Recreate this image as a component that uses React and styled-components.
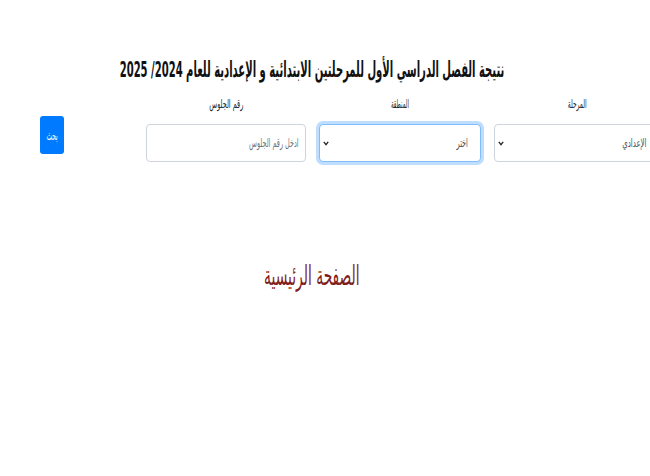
import styled, { createGlobalStyle } from "styled-components";

const GlobalStyle = createGlobalStyle`
  html, body {
    margin: 0;
    padding: 0;
    background: #fff;
    overflow: hidden;
  }
  body {
    font-family: "DejaVu Sans Condensed", "DejaVu Sans", sans-serif;
    color: #212529;
  }
`;

// the screenshot's text is very narrow, so glyphs are squeezed sideways
const Narrow = styled.span`
  display: inline-block;
  white-space: nowrap;
  transform: scaleX(${(p) => p.$s || 0.58});
  transform-origin: ${(p) => p.$o || "center"} center;
`;

const Page = styled.div`
  width: 650px;
  padding-top: 55px;
`;

const Title = styled.h1`
  width: 624px;
  margin: 0;
  display: flex;
  justify-content: center;
  direction: rtl;
  font-size: 22px;
  font-weight: bold;
  line-height: 29px;
  color: #111;
`;

const Form = styled.form`
  display: flex;
  direction: rtl;
  align-items: flex-start;
  gap: 13px;
  width: 620px;
  margin: 13px 0 0 40px;
`;

const Field = styled.div`
  flex: 0 0 ${(p) => p.$w}px;
  display: flex;
  flex-direction: column;
  align-items: stretch;
`;

const Label = styled.label`
  display: flex;
  justify-content: center;
  font-size: 12px;
  line-height: 14px;
  margin-bottom: 13px;
  color: #212529;
`;

const Control = styled.div`
  box-sizing: border-box;
  height: 38px;
  display: flex;
  align-items: center;
  justify-content: space-between;
  padding: 0 ${(p) => (p.$placeholder ? 6 : 12)}px 0 3px;
  border: 1px solid ${(p) => (p.$focus ? "#80bdff" : "#ced4da")};
  border-radius: 4px;
  box-shadow: ${(p) => (p.$focus ? "0 0 0 3px rgba(0, 123, 255, 0.25)" : "none")};
  background: #fff;
  font-size: 12px;
  color: ${(p) => (p.$placeholder ? "#6c757d" : "#495057")};
`;

const Chevron = () => (
  <svg width="6" height="6" viewBox="0 0 6 6">
    <polyline points="0.8,1.8 3,4.6 5.2,1.8" fill="none" stroke="#222" strokeWidth="1.3" />
  </svg>
);

const Button = styled.button`
  margin: 19px 0 0 0;
  margin-right: auto;
  width: 24px;
  height: 38px;
  padding: 0;
  border: none;
  border-radius: 3px;
  background: #007bff;
  color: #fff;
  font-family: inherit;
  font-size: 13px;
`;

const Home = styled.h2`
  width: 624px;
  margin: 97px 0 0 0;
  display: flex;
  justify-content: center;
  direction: rtl;
  font-size: 28px;
  line-height: 34px;
  font-weight: normal;
  color: #7f1d1d;
`;

export default function App() {
  return (
    <Page>
      <GlobalStyle />
      <Title>
        <Narrow $s={0.506}>نتيجة الفصل الدراسي الأول للمرحلتين الابتدائية و الإعدادية للعام 2024/ 2025</Narrow>
      </Title>
      <Form>
        <Field $w={166}>
          <Label><Narrow $s={0.55}>المرحلة</Narrow></Label>
          <Control>
            <Narrow $s={0.65} $o="right">الإعدادي</Narrow>
            <Chevron />
          </Control>
        </Field>
        <Field $w={162}>
          <Label><Narrow $s={0.5}>المنطقة</Narrow></Label>
          <Control $focus>
            <Narrow $s={0.6} $o="right">اختر</Narrow>
            <Chevron />
          </Control>
        </Field>
        <Field $w={160}>
          <Label><Narrow $s={0.6}>رقم الجلوس</Narrow></Label>
          <Control $placeholder>
            <Narrow $s={0.6} $o="right">ادخل رقم الجلوس</Narrow>
          </Control>
        </Field>
        <Button type="button"><Narrow $s={0.5}>بحث</Narrow></Button>
      </Form>
      <Home><Narrow $s={0.55}>الصفحة الرئيسية</Narrow></Home>
    </Page>
  );
}
